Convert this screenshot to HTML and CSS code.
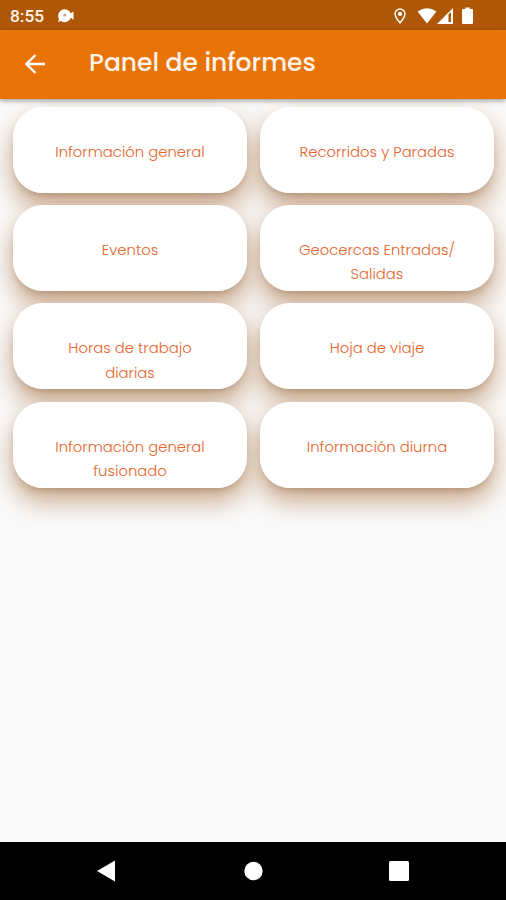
FILE: index.html
```html
<!DOCTYPE html>
<html lang="es">
<head>
    <meta charset="UTF-8">
    <meta name="viewport" content="width=device-width, initial-scale=1.0">
    <title>Panel de informes</title>
    <link rel="stylesheet" href="styles.css">
</head>
<body>
    <div class="status-bar">
        <span class="hora">8:55</span>
        <svg class="aviso" width="18" height="16" viewBox="0 0 18 16">
            <path d="M1 14 L2 11 A6.500 6.500 0 1 1 12.500 12 Q8 16 4 13 Z" fill="#fff"/>
            <path d="M11 7 L16.500 3.500 V12 Z" fill="#fff"/>
            <circle cx="7.800" cy="7" r="1.600" fill="#c9a98e"/>
        </svg>
        <div class="status-iconos">
            <svg width="12" height="16" viewBox="0 0 12 16">
                <path d="M6 1 A4.900 4.900 0 0 0 1.100 5.900 C1.100 9 6 14.800 6 14.800 S10.900 9 10.900 5.900 A4.900 4.900 0 0 0 6 1 Z" fill="none" stroke="#fff" stroke-width="1.500"/>
                <circle cx="6" cy="5.900" r="2.100" fill="#fff"/>
            </svg>
            <svg class="wifi" width="20" height="16" viewBox="0 0 20 16">
                <path d="M0.500 3.500 Q10 -3 19.500 3.500 L10 15.500 Z" fill="#fff"/>
            </svg>
            <svg class="senal" width="16" height="16" viewBox="0 0 16 16">
                <path d="M0 16 L16 0 V16 Z" fill="#fff"/>
                <path d="M11.500 6.500 L14 4 V14 H11.500 Z" fill="#ad5707"/>
            </svg>
            <svg class="bateria" width="11" height="17" viewBox="0 0 11 17">
                <path d="M1 2 H3.200 V0.500 H7.800 V2 H10 Q11 2 11 3 V16 Q11 17 10 17 H1 Q0 17 0 16 V3 Q0 2 1 2 Z" fill="#fff"/>
            </svg>
        </div>
    </div>

    <header>
        <svg class="volver" width="20" height="20" viewBox="0 0 20 20">
            <path d="M20 10 H2 M10.500 1 L1.500 10 L10.500 19" fill="none" stroke="#fff" stroke-width="2.300"/>
        </svg>
        <h1>Panel de informes</h1>
    </header>

    <main>
        <div class="informes">
            <a class="card">Información general</a>
            <a class="card">Recorridos y Paradas</a>
            <a class="card">Eventos</a>
            <a class="card">Geocercas Entradas/<br>Salidas</a>
            <a class="card">Horas de trabajo<br>diarias</a>
            <a class="card">Hoja de viaje</a>
            <a class="card">Información general<br>fusionado</a>
            <a class="card">Información diurna</a>
        </div>
    </main>

    <nav>
        <svg width="20" height="22" viewBox="0 0 20 22"><path d="M0 11 L18 0.500 V21.500 Z" fill="#fff"/></svg>
        <svg width="20" height="20" viewBox="0 0 20 20"><circle cx="10.500" cy="10" r="9.200" fill="#fff"/></svg>
        <svg width="20" height="20" viewBox="0 0 20 20"><rect width="20" height="20" rx="1.500" fill="#fff"/></svg>
    </nav>
</body>
</html>
```
FILE: styles.css
```css
* {
    box-sizing: border-box;
}

body {
    display: flex;
    flex-direction: column;
    height: 900px;
    margin: 0;
    overflow: hidden;
    background-color: #fafafa;
    font-family: Poppins, Inter, sans-serif;
}

svg {
    display: block;
    flex: none;
}

.status-bar {
    display: flex;
    align-items: center;
    height: 30px;
    padding: 1px 33px 0 10px;
    background-color: #ad5707;
    color: #fff3ea;
}

.hora {
    width: 47px;
    font-family: Roboto, sans-serif;
    font-size: 17.3px;
    font-weight: 500;
}

.status-iconos {
    display: flex;
    align-items: center;
    margin-left: auto;
}

.wifi {
    margin-left: 11px;
}

.bateria {
    margin-left: 9px;
}

header {
    display: flex;
    align-items: center;
    position: relative;
    z-index: 1;
    height: 68.5px;
    padding-left: 25px;
    background-color: #e87409;
    box-shadow: 0 2px 5px rgba(0, 0, 0, 0.35);
}

h1 {
    margin: 0 0 2px 44px;
    color: #fff3ea;
    font-size: 25px;
    font-weight: 500;
    white-space: nowrap;
}

main {
    flex: 1;
    padding: 8px 12px 0 13px;
}

.informes {
    display: grid;
    grid-template-columns: 1fr 1fr;
    grid-auto-rows: 86px;
    gap: 12.4px 13px;
    isolation: isolate;
}

.card {
    position: relative;
    padding-top: 33px;
    border-radius: 30px;
    background-color: white;
    color: #e5652b;
    font-size: 14.8px;
    font-weight: 300;
    line-height: 24.6px;
    text-align: center;
}

/* la sombra va detrás de todas las tarjetas */
.card::before {
    content: "";
    position: absolute;
    inset: 0;
    z-index: -1;
    border-radius: 30px;
    box-shadow: 0 5px 8px -4px rgba(100, 65, 30, 0.35), 0 13px 24px 1px rgba(160, 95, 40, 0.5);
}

nav {
    display: flex;
    align-items: center;
    justify-content: space-between;
    height: 58px;
    padding: 0 97px;
    background-color: black;
}
```
